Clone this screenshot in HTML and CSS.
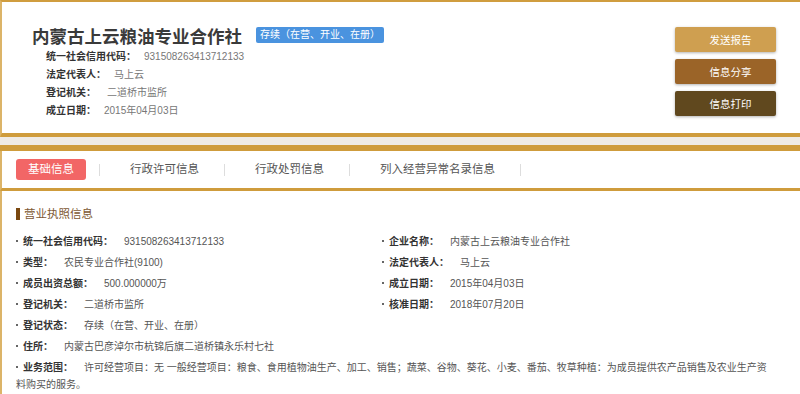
FILE: index.html
```html
<!DOCTYPE html>
<html>
<head>
<meta charset="utf-8">
<meta name="viewport" content="width=device-width, initial-scale=1">
<link rel="stylesheet" href="styles.css">
</head>
<body>

<div class="head">
  <div class="head-info">
    <h1 class="title">内蒙古上云粮油专业合作社<span class="badge">存续（在营、开业、在册）</span></h1>
    <div class="head-row"><b>统一社会信用代码：</b><span>931508263413712133</span></div>
    <div class="head-row"><b>法定代表人：</b><span>马上云</span></div>
    <div class="head-row"><b>登记机关：</b><span class="wide">二道桥市监所</span></div>
    <div class="head-row"><b>成立日期：</b><span>2015年04月03日</span></div>
  </div>
  <div class="actions">
    <button class="btn btn-send">发送报告</button>
    <button class="btn btn-share">信息分享</button>
    <button class="btn btn-print">信息打印</button>
  </div>
</div>

<div class="panel">
  <div class="tabs">
    <a class="tab active">基础信息</a>
    <span class="sep"></span>
    <a class="tab">行政许可信息</a>
    <span class="sep"></span>
    <a class="tab">行政处罚信息</a>
    <span class="sep"></span>
    <a class="tab">列入经营异常名录信息</a>
    <span class="sep"></span>
  </div>

  <div class="content">
    <h3 class="section-title">营业执照信息</h3>
    <div class="fields">
      <div class="field"><b>统一社会信用代码：</b><span>931508263413712133</span></div>
      <div class="field"><b>企业名称：</b><span>内蒙古上云粮油专业合作社</span></div>
      <div class="field"><b>类型：</b><span>农民专业合作社(9100)</span></div>
      <div class="field"><b>法定代表人：</b><span>马上云</span></div>
      <div class="field"><b>成员出资总额：</b><span>500.000000万</span></div>
      <div class="field"><b>成立日期：</b><span>2015年04月03日</span></div>
      <div class="field"><b>登记机关：</b><span>二道桥市监所</span></div>
      <div class="field"><b>核准日期：</b><span>2018年07月20日</span></div>
      <div class="field full"><b>登记状态：</b><span>存续（在营、开业、在册）</span></div>
      <div class="field full"><b>住所：</b><span>内蒙古巴彦淖尔市杭锦后旗二道桥镇永乐村七社</span></div>
      <div class="field full scope"><b>业务范围：</b><span>许可经营项目：无 一般经营项目：粮食、食用植物油生产、加工、销售；蔬菜、谷物、葵花、小麦、番茄、牧草种植：为成员提供农产品销售及农业生产资料购买的服务。</span></div>
    </div>
  </div>
</div>

</body>
</html>
```

FILE: styles.css
```css
body {
  margin: 0;
  background-color: #efebe5;
  font-family: "Liberation Sans", "Noto Sans CJK SC", sans-serif;
  color: #333;
}

* {
  box-sizing: border-box;
}

/* top card */
.head {
  display: flex;
  justify-content: space-between;
  height: 137px;
  background: #fff;
  border-top: 2px solid #d09d3f;
  border-left: 2px solid #dcb468;
  border-bottom: 4px solid #cf9c3c;
}

.head-info {
  padding: 24px 0 0 30px;
}

.title {
  margin: 0;
  font-size: 17.5px;
  line-height: 22px;
  color: #3a3a3a;
  font-weight: bold;
}

.badge {
  display: inline-block;
  vertical-align: top;
  margin: 1px 0 0 14px;
  padding: 0 4px;
  height: 16px;
  line-height: 16px;
  font-size: 10px;
  font-weight: normal;
  color: #fff;
  background: #4a93df;
  border-radius: 2px;
}

.head-row {
  padding-left: 14px;
  font-size: 10px;
  line-height: 18px;
}

.head-row b {
  color: #333;
}

.head-row span {
  margin-left: 8px;
  color: #777;
}

.head-row span.wide {
  margin-left: 11px;
}

.actions {
  display: flex;
  flex-direction: column;
  gap: 7px;
  padding: 25px 24px 0 0;
}

.btn {
  width: 101px;
  height: 25px;
  padding: 0 0 0 10px;
  border: none;
  border-radius: 2px;
  color: #fff;
  font-family: inherit;
  font-size: 10.5px;
  box-shadow: 0 1px 3px rgba(0, 0, 0, 0.3);
  cursor: pointer;
}

.btn-send {
  background: #cf9f50;
}

.btn-share {
  background: #9b6428;
}

.btn-print {
  background: #60481e;
}

/* tab card */
.panel {
  margin-top: 8px;
  background: #fff;
  border-top: 6px solid #cf9c3c;
}

.tabs {
  display: flex;
  align-items: center;
  height: 40px;
  padding-left: 14px;
  border-left: 2px solid #dcb468;
  border-bottom: 3px solid #cf9c3c;
}

.tab {
  height: 21px;
  padding: 0 12px;
  line-height: 21px;
  font-size: 11.5px;
  color: #555;
  border-radius: 3px;
  cursor: pointer;
}

.tab.active {
  background: #f26666;
  color: #fff;
}

.sep {
  width: 1px;
  height: 12px;
  margin: 0 18px 0 13px;
  background: #ddd;
}

.content {
  padding: 14px 14px 20px 14px;
  border-left: 2px solid #dcb468;
}

.section-title {
  display: flex;
  align-items: center;
  margin: 0;
  font-size: 11.5px;
  line-height: 18px;
  font-weight: normal;
  color: #7d5833;
}

.section-title:before {
  content: "";
  width: 4px;
  height: 12px;
  margin-right: 4px;
  background: #7a4810;
}

.fields {
  display: grid;
  grid-template-columns: 366px 1fr;
  row-gap: 3px;
  margin-top: 10px;
}

.field {
  font-size: 10px;
  line-height: 18px;
}

.field:before {
  content: "";
  display: inline-block;
  width: 2px;
  height: 2px;
  margin: 0 5px 3px 0;
  vertical-align: middle;
  background: #666;
}

.field b {
  color: #333;
}

.field span {
  margin-left: 11px;
  color: #555;
}

.full {
  grid-column: 1 / 3;
}

.scope {
  line-height: 17px;
  padding-right: 14px;
}
```
